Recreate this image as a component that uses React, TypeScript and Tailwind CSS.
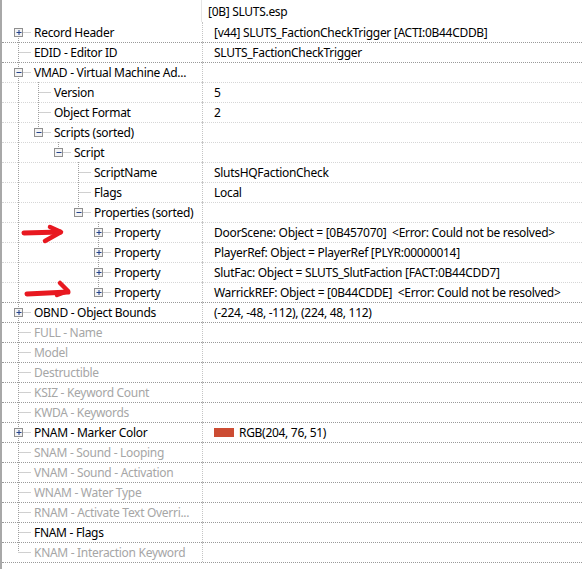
import React from "react";

type Row = {
  label: string;
  level: number;
  box?: "+" | "-";
  value?: string;
  dim?: boolean;
  swatch?: string;
};

const rows: Row[] = [
  { label: "Record Header", level: 0, box: "+", value: "[v44] SLUTS_FactionCheckTrigger [ACTI:0B44CDDB]" },
  { label: "EDID - Editor ID", level: 0, value: "SLUTS_FactionCheckTrigger" },
  { label: "VMAD - Virtual Machine Ad...", level: 0, box: "-" },
  { label: "Version", level: 1, value: "5" },
  { label: "Object Format", level: 1, value: "2" },
  { label: "Scripts (sorted)", level: 1, box: "-" },
  { label: "Script", level: 2, box: "-" },
  { label: "ScriptName", level: 3, value: "SlutsHQFactionCheck" },
  { label: "Flags", level: 3, value: "Local" },
  { label: "Properties (sorted)", level: 3, box: "-" },
  { label: "Property", level: 4, box: "+", value: "DoorScene: Object = [0B457070]  <Error: Could not be resolved>" },
  { label: "Property", level: 4, box: "+", value: "PlayerRef: Object = PlayerRef [PLYR:00000014]" },
  { label: "Property", level: 4, box: "+", value: "SlutFac: Object = SLUTS_SlutFaction [FACT:0B44CDD7]" },
  { label: "Property", level: 4, box: "+", value: "WarrickREF: Object = [0B44CDDE]  <Error: Could not be resolved>" },
  { label: "OBND - Object Bounds", level: 0, box: "+", value: "(-224, -48, -112), (224, 48, 112)" },
  { label: "FULL - Name", level: 0, dim: true },
  { label: "Model", level: 0, dim: true },
  { label: "Destructible", level: 0, dim: true },
  { label: "KSIZ - Keyword Count", level: 0, dim: true },
  { label: "KWDA - Keywords", level: 0, dim: true },
  { label: "PNAM - Marker Color", level: 0, box: "+", value: "RGB(204, 76, 51)", swatch: "#cc4c33" },
  { label: "SNAM - Sound - Looping", level: 0, dim: true },
  { label: "VNAM - Sound - Activation", level: 0, dim: true },
  { label: "WNAM - Water Type", level: 0, dim: true },
  { label: "RNAM - Activate Text Overri...", level: 0, dim: true },
  { label: "FNAM - Flags", level: 0 },
  { label: "KNAM - Interaction Keyword", level: 0, dim: true },
];

// does a later row at this level exist before the tree climbs above it
function hasMore(i: number, level: number) {
  for (let j = i + 1; j < rows.length; j++) {
    if (rows[j].level < level) return false;
    if (rows[j].level === level) return true;
  }
  return false;
}

const LINE = "#a0a0a0";

function Guides({ i, row }: { i: number; row: Row }) {
  const w = 32 + row.level * 20;
  const g = (l: number) => 16 + l * 20 + 0.5; // guide x, inside cell (offset by 2px border)
  const lines: React.ReactNode[] = [];
  for (let a = 0; a < row.level; a++) {
    if (hasMore(i, a)) lines.push(<line key={"a" + a} x1={g(a)} y1={0} x2={g(a)} y2={20} />);
  }
  const x = g(row.level);
  const top = i === 0 ? 10 : 0;
  const bottom = hasMore(i, row.level) ? 20 : 10;
  lines.push(<line key="v" x1={x} y1={top} x2={x} y2={bottom} />);
  lines.push(<line key="h" x1={x} y1={10.5} x2={w - 3} y2={10.5} />);
  return (
    <svg width={w} height={20} className="shrink-0">
      <g stroke={LINE} strokeWidth={1} strokeDasharray="1 1">
        {lines}
      </g>
      {row.box && (
        <g>
          <rect x={x - 4} y={6.5} width={8} height={8} fill="#f3f3f3" stroke="#8f8f8f" />
          <line x1={x - 2} y1={10.5} x2={x + 3} y2={10.5} stroke="#22418a" />
          {row.box === "+" && <line x1={x + 0.5} y1={8} x2={x + 0.5} y2={13} stroke="#22418a" />}
        </g>
      )}
    </svg>
  );
}

function Arrow({ d1, d2 }: { d1: string; d2: string }) {
  return (
    <svg width={70} height={24} className="absolute" style={{ left: 0, top: 0 }}>
      <path d={d1} fill="none" stroke="#e81820" strokeWidth={5} strokeLinecap="round" strokeLinejoin="round" />
      <path d={d2} fill="none" stroke="#e81820" strokeWidth={4.5} strokeLinecap="round" strokeLinejoin="round" />
    </svg>
  );
}

export default function App() {
  return (
    <div
      className="relative w-[582px] h-[569px] bg-white border-l-2 border-[#a8a8a8] text-[12px] tracking-[-0.3px] text-black overflow-hidden"
      style={{ fontFamily: '"Noto Sans", "Noto Sans CJK KR", sans-serif' }}
    >
      <div className="flex h-[22px]">
        <div className="w-[200px] border-r border-[#e5e5e5]" />
        <div className="pl-[6px] pt-[2px] flex items-center leading-none">[0B] SLUTS.esp</div>
      </div>
      {rows.map((row, i) => {
        const next = rows[i + 1];
        const dark = !next || next.level === 0;
        return (
          <div
            key={i}
            className={`flex h-[20px] border-b border-dotted ${dark ? "border-[#9a9a9a]" : "border-[#d6d6d6]"} box-content -mb-px`}
          >
            <div className="w-[200px] flex items-center overflow-hidden">
              <Guides i={i} row={row} />
              <span className={`whitespace-nowrap leading-none pt-[2px] ${row.dim ? "text-[#a6a6a6]" : ""}`}>{row.label}</span>
            </div>
            <div className="flex-1 flex items-center pl-[11px] pt-[2px] border-l border-dotted border-[#c4c4c4] whitespace-pre leading-none">
              {row.swatch && <span className="inline-block w-[20px] h-[9px] mr-[5px] -mt-[1px] bg-[#cc4c33]" />}
              {row.value}
            </div>
          </div>
        );
      })}
      <div className="absolute left-0 top-[222px]">
        <Arrow d1="M22 11 L58 10" d2="M48 5 L59 10 L43 19" />
      </div>
      <div className="absolute left-0 top-[279px]">
        <Arrow d1="M25 15 L66 13" d2="M58 4 L66 12 L55 16" />
      </div>
    </div>
  );
}
